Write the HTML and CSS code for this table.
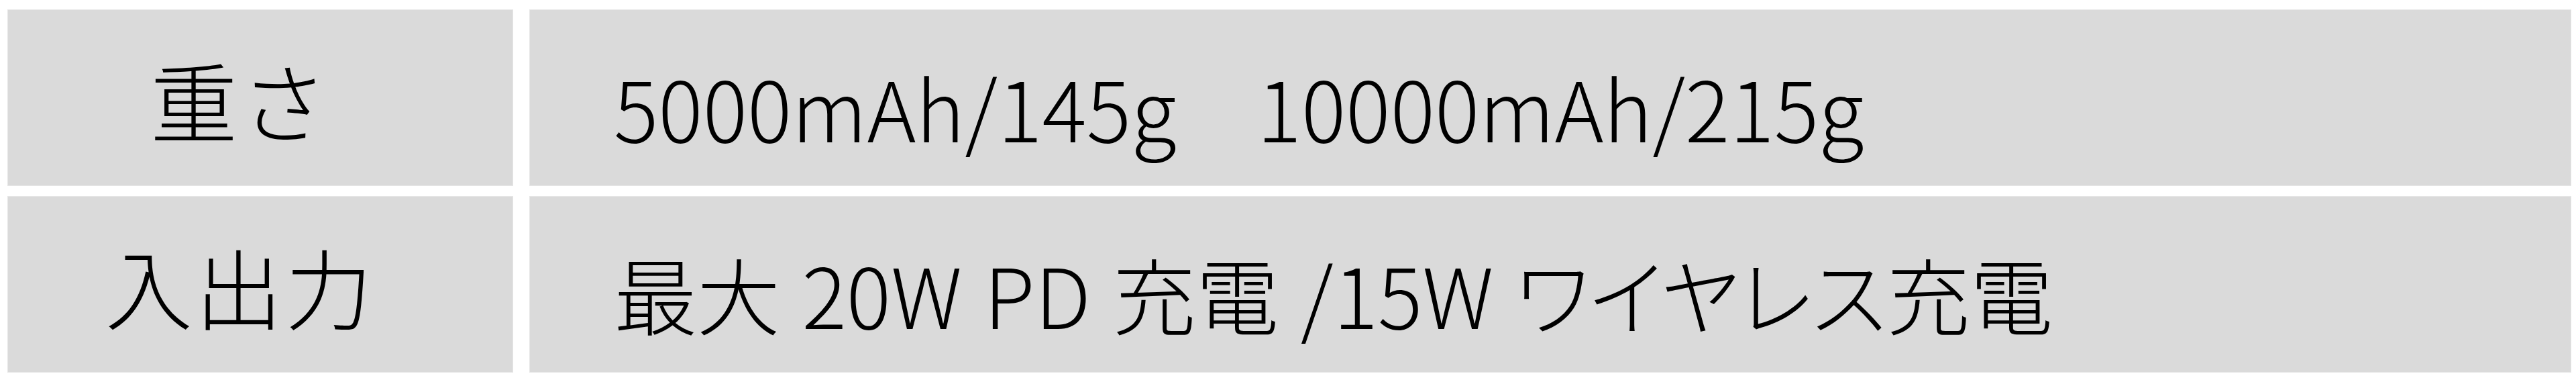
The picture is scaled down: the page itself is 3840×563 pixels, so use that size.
FILE: index.html
```html
<!DOCTYPE html>
<html lang="ja">
<head>
<meta charset="utf-8">
<title>仕様</title>
<link rel="stylesheet" href="styles.css">
</head>
<body>
<div class="spec">
  <div class="label">重さ</div>
  <div class="value"><span>5000mAh/145g</span><span class="second">10000mAh/215g</span></div>
  <div class="label">入出力</div>
  <div class="value words">最大 20W PD 充電 /15W <span class="kana">ワイヤレス</span>充電</div>
</div>
</body>
</html>
```
FILE: styles.css
```css
html, body {
  margin: 0;
  padding: 0;
  background: #ffffff;
}
.spec {
  display: grid;
  grid-template-columns: 752px 3042px;
  grid-auto-rows: 261px;
  column-gap: 26px;
  row-gap: 17px;
  padding: 15px 8px 9px 12px;
  font-family: "Noto Sans CJK JP", "Noto Sans", sans-serif;
  font-weight: 300;
  color: #000000;
}
.label, .value {
  background: #dadada;
  box-shadow: 0 0 0 1px #e6e6e6;
  display: flex;
  align-items: center;
  white-space: pre;
  box-sizing: border-box;
}
.label {
  font-size: 130px;
  letter-spacing: 4px;
  justify-content: center;
  padding-right: 60px;
  padding-top: 0;
}
.value {
  font-size: 124px;
  padding-left: 125px;
  padding-top: 24px;
}
.words {
  word-spacing: 5px;
}
.kana {
  font-feature-settings: "palt";
}
.second {
  margin-left: 120px;
}
```
